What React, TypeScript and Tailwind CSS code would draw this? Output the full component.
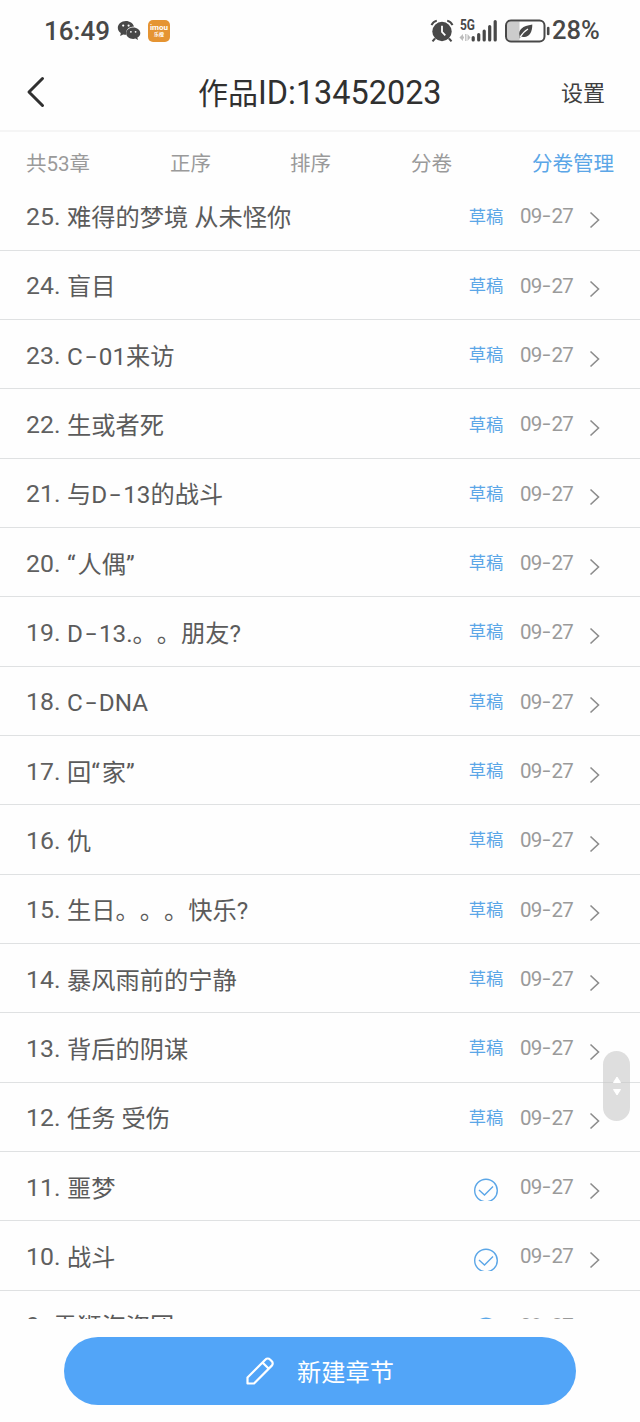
import React from "react";

type Chapter = { no: number; title: string; draft: boolean };

const chapters: Chapter[] = [
  { no: 25, title: "难得的梦境 从未怪你", draft: true },
  { no: 24, title: "盲目", draft: true },
  { no: 23, title: "C-01来访", draft: true },
  { no: 22, title: "生或者死", draft: true },
  { no: 21, title: "与D-13的战斗", draft: true },
  { no: 20, title: "“人偶”", draft: true },
  { no: 19, title: "D-13.。。朋友?", draft: true },
  { no: 18, title: "C-DNA", draft: true },
  { no: 17, title: "回“家”", draft: true },
  { no: 16, title: "仇", draft: true },
  { no: 15, title: "生日。。。快乐?", draft: true },
  { no: 14, title: "暴风雨前的宁静", draft: true },
  { no: 13, title: "背后的阴谋", draft: true },
  { no: 12, title: "任务 受伤", draft: true },
  { no: 11, title: "噩梦", draft: false },
  { no: 10, title: "战斗", draft: false },
  { no: 9, title: "雪狮海盗团", draft: false },
];

/** Text whose hyphens are drawn wide and raised, and whose quotes are spaced. */
function ChapterTitle({ text }: { text: string }) {
  return (
    <>
      {text.split(/([-“”])/).map((part, i) => {
        if (part === "-") {
          return (
            <span key={i} className="inline-block w-[0.660em] -translate-y-[1px] scale-x-[1.600] text-center">-</span>
          );
        }
        if (part === "“" || part === "”") {
          return <span key={i} className="tracking-[2px]">{part}</span>;
        }
        return <React.Fragment key={i}>{part}</React.Fragment>;
      })}
    </>
  );
}

function ChapterDate({ month, day }: { month: string; day: string }) {
  return (
    <span className="ml-[16px] mt-[2px] w-[54px] shrink-0 whitespace-nowrap text-[20.500px] tracking-[-0.800px] text-[#9a9a9a]">
      {month}
      <span className="inline-block w-[10px] -translate-y-[1px] scale-x-[1.400] text-center">-</span>
      {day}
    </span>
  );
}

function StatusBar() {
  return (
    <div className="flex h-[61px] shrink-0 items-center pl-[44px] font-medium text-[#484848]">
      <span className="w-[73px] whitespace-nowrap text-[26px] leading-none">16:49</span>
      <svg width="24" height="22" viewBox="0 0 24 22" className="shrink-0" fill="#484848">
        <path d="M9 1C4.300 1 .8 4 .8 7.800c0 2.200 1.100 4 3 5.300L3.200 16l3-1.600c1 .3 2 .4 3 .4-1-4.700 3-8.300 7.900-8.200C16 3.200 12.700 1 9 1Z" />
        <path d="M16.200 7.600c-3.900 0-7 2.500-7 5.600s3.100 5.700 7 5.700c.8 0 1.600-.1 2.300-.3l2.400 1.500-.5-2.500c1.800-1 2.900-2.600 2.900-4.400 0-3.100-3.200-5.600-7.100-5.600Z" />
        <g fill="#fff"><circle cx="6.200" cy="5.600" r="1.100" /><circle cx="11.600" cy="5.600" r="1.100" /><circle cx="13.900" cy="11.800" r=".9" /><circle cx="18.600" cy="11.800" r=".9" /></g>
      </svg>
      <div className="ml-[7px] flex h-[22px] w-[22px] shrink-0 flex-col items-center justify-center rounded-[5px] bg-[#e59432] text-white">
        <span className="text-[8px] font-bold leading-[7px]">imou</span>
        <span className="text-[5px] font-bold leading-[6px]">乐橙</span>
      </div>

      <svg width="24" height="24" viewBox="0 0 24 24" className="ml-[260px] shrink-0" fill="none">
        <circle cx="12" cy="12.500" r="9.700" fill="#484848" />
        <path d="M1.500 6.200A8 8 0 0 1 6.800 1.600M17.200 1.600a8 8 0 0 1 5.300 4.600M5 19.500l-2.500 2.900M19 19.500l2.500 2.900" stroke="#484848" strokeWidth="2" />
        <path d="M12 6.800V13l3.300 3.300" stroke="#fff" strokeWidth="1.800" />
      </svg>
      <svg width="39" height="26" viewBox="0 0 39 26" className="ml-[5px] shrink-0">
        <text x="1" y="11.500" fontSize="14" fontWeight="700" textLength="15" lengthAdjust="spacingAndGlyphs" fill="#484848">5G</text>
        <path d="M.4 19.500 4 16v2.500h1v2H4V23ZM11.500 19.500 8.500 16v7Z" fill="#bcbcbc" />
        <path d="M6.800 16v7" stroke="#bcbcbc" strokeWidth="1.300" />
        <g stroke="#484848" strokeWidth="3.200" strokeLinecap="round">
          <path d="M14.200 19.500v2.500M19.700 16.500v5.500M25.200 13v9M30.700 8.500v13.500M36.200 3.500v18.500" />
        </g>
      </svg>
      <svg width="46" height="24" viewBox="0 0 46 24" className="ml-[7px] shrink-0" fill="none">
        <path d="M6 2.500h8.500v19H6a4 4 0 0 1-4-4v-11a4 4 0 0 1 4-4Z" fill="#ccc" />
        <rect x="1" y="1.500" width="38.500" height="21" rx="5" stroke="#484848" strokeWidth="2" />
        <path d="M43.200 9v6" stroke="#484848" strokeWidth="2.600" strokeLinecap="round" />
        <path d="M14.500 17c-1.500-6.500 3-10 12.800-11.500C27.500 14 23 20 16.500 17.500L14.500 19.500Z" fill="#484848" />
        <path d="M15 18.500c2-4 4-6 8-8.500" stroke="#fff" strokeWidth="1.100" />
      </svg>
      <span className="ml-[1px] whitespace-nowrap text-[25.500px] leading-none">28%</span>
    </div>
  );
}

function DraftMark() {
  return <span className="text-[17.300px] leading-none text-[#5ba6e7]">草稿</span>;
}

function PublishedMark() {
  return (
    <svg width="26" height="23" viewBox="0 0 26 23" className="mt-[4px]" fill="none" stroke="#5ba6e7" strokeWidth="1.400">
      <circle cx="13" cy="12.500" r="11.300" />
      <path d="m6 12 5.500 5L20 8.500" />
    </svg>
  );
}

function ChapterRow({ chapter }: { chapter: Chapter }) {
  return (
    <li className="flex h-[69.330px] shrink-0 items-center border-b border-[#dfe1e2] pl-[26px]">
      <span className={`mt-[2px] shrink-0 whitespace-nowrap text-[24.800px] text-[#606060] ${chapter.no < 10 ? "w-[27px]" : "w-[41px]"}`}>
        {chapter.no}.
      </span>
      <span className="mt-[5px] grow whitespace-nowrap text-[24.250px] text-[#5b5b5b]">
        <ChapterTitle text={chapter.title} />
      </span>
      <span className="mt-[3px] flex w-[36px] shrink-0 items-center justify-center">
        {chapter.draft ? <DraftMark /> : <PublishedMark />}
      </span>
      <ChapterDate month="09" day="27" />
      <svg width="12" height="18" viewBox="0 0 12 18" className="ml-[15px] mr-[39px] mt-[9px] shrink-0" fill="none" stroke="#8c8c8c" strokeWidth="1.600">
        <path d="m1.500 1.500 8 7.500-8 7.500" />
      </svg>
    </li>
  );
}

export default function App() {
  return (
    <div className="relative flex h-[1422px] w-[640px] flex-col overflow-hidden bg-[#fefefe] font-['Roboto','Noto_Sans_CJK_SC',sans-serif] font-normal [text-spacing-trim:space-all]">
      <StatusBar />
      <header className="flex h-[71px] shrink-0 items-center border-b-2 border-[#f5f5f5] pl-[26px] pr-[35px]">
        <svg width="20" height="32" viewBox="0 0 20 32" className="mb-[7px] shrink-0" fill="none" stroke="#303030" strokeWidth="3" strokeLinecap="round" strokeLinejoin="round">
          <path d="M16.500 2.500 3 16l13.500 13.500" />
        </svg>
        <h1 className="mb-[4px] ml-[152px] grow whitespace-nowrap text-[30px] leading-none text-[#303030]">
          作品<span className="text-[32.400px]">ID:13452023</span>
        </h1>
        <span className="mb-[4px] text-[22px] leading-none text-[#404040]">设置</span>
      </header>
      <nav className="flex h-[49.500px] shrink-0 items-center whitespace-nowrap pl-[26px] pt-[14px] text-[20.500px] leading-none text-[#9a9a9a]">
        <span className="w-[144px]">共53章</span>
        <span className="w-[120px]">正序</span>
        <span className="w-[121px]">排序</span>
        <span className="w-[121px]">分卷</span>
        <span className="text-[#5ba6e7]">分卷管理</span>
      </nav>
      <ul className="flex h-[1137.500px] shrink-0 flex-col overflow-hidden">
        {chapters.map((chapter) => (
          <ChapterRow key={chapter.no} chapter={chapter} />
        ))}
      </ul>
      <button className="mx-auto mt-[18px] flex h-[68px] w-[512px] shrink-0 items-center justify-center rounded-full bg-[#52a5f8] text-[24.200px] leading-none text-white">
        <svg width="28" height="28" viewBox="0 0 28 28" className="mr-[23px]" fill="none" stroke="#fff" strokeWidth="2.200" strokeLinejoin="round">
          <path d="M1.500 26.500v-6L19.500 2.500a3 3 0 0 1 4.500 0l1.800 1.800a3 3 0 0 1 0 4.300L8 26.500ZM16.500 5.500l6.300 6.300" />
        </svg>
        <span className="pt-[4px]">新建章节</span>
      </button>
      <div className="absolute left-[603px] top-[1051px] flex h-[70px] w-[27px] flex-col items-center justify-center gap-[6px] rounded-full bg-[#c8c8c8]/60">
        <svg width="10" height="7" viewBox="0 0 10 7" fill="#fff" stroke="#fff" strokeLinejoin="round"><path d="M5 1 8.500 6.500h-7Z" /></svg>
        <svg width="10" height="7" viewBox="0 0 10 7" fill="#fff" stroke="#fff" strokeLinejoin="round"><path d="M5 6 1.500 .5h7Z" /></svg>
      </div>
    </div>
  );
}
